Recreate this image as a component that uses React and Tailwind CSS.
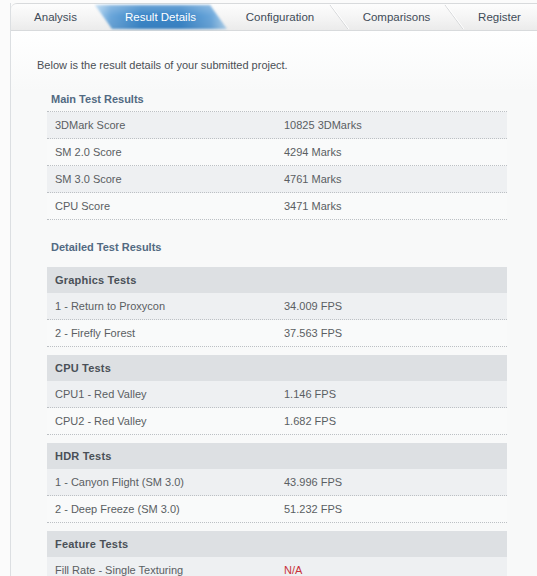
import React from "react";

const mainRows = [
  ["3DMark Score", "10825 3DMarks"],
  ["SM 2.0 Score", "4294 Marks"],
  ["SM 3.0 Score", "4761 Marks"],
  ["CPU Score", "3471 Marks"],
];

const sections = [
  {
    title: "Graphics Tests",
    rows: [
      ["1 - Return to Proxycon", "34.009 FPS"],
      ["2 - Firefly Forest", "37.563 FPS"],
    ],
  },
  {
    title: "CPU Tests",
    rows: [
      ["CPU1 - Red Valley", "1.146 FPS"],
      ["CPU2 - Red Valley", "1.682 FPS"],
    ],
  },
  {
    title: "HDR Tests",
    rows: [
      ["1 - Canyon Flight (SM 3.0)", "43.996 FPS"],
      ["2 - Deep Freeze (SM 3.0)", "51.232 FPS"],
    ],
  },
  {
    title: "Feature Tests",
    rows: [["Fill Rate - Single Texturing", "N/A", true]],
  },
];

function Row({ label, value, odd, red }) {
  return (
    <div
      className={`flex h-[27px] items-center border-b border-dotted border-[#bcc0c4] text-[11px] leading-[13px] text-[#5a5e62] ${
        odd ? "bg-[#eef0f2]" : "bg-[#f9fafa]"
      }`}
    >
      <div className="w-[237px] shrink-0 pl-[8px]">{label}</div>
      <div className={red ? "text-[#c8323a]" : ""}>{value}</div>
    </div>
  );
}

function Separator() {
  return (
    <svg
      className="absolute left-[-10px] top-0 h-full w-[20px]"
      viewBox="0 0 20 27"
      preserveAspectRatio="none"
    >
      <line x1="1" y1="1" x2="19" y2="26" stroke="#d3d5d7" strokeWidth="1" />
      <line x1="2" y1="1" x2="20" y2="26" stroke="#ffffff" strokeWidth="1" />
    </svg>
  );
}

function Tab({ label, width, active, sep }) {
  return (
    <div
      className={`relative flex h-full shrink-0 items-center justify-center ${width}`}
    >
      {sep && <Separator />}
      {active && (
        <div className="absolute left-[-5px] top-[1px] bottom-[1px] w-[132px] blur-[0.8px]">
          <div className="h-full w-full bg-[linear-gradient(90deg,#b3d5f0_0%,#6aa6da_12%,#3b86c8_35%,#3b86c8_65%,#6aa6da_88%,#b3d5f0_100%)] [clip-path:polygon(0_0,115px_0,132px_100%,17px_100%)]">
            <div className="h-full w-full bg-[linear-gradient(180deg,rgba(255,255,255,0.25)_0%,rgba(255,255,255,0)_45%,rgba(0,0,0,0.05)_100%)]" />
          </div>
        </div>
      )}
      <span
        className={`relative text-[11.5px] leading-[14px] ${
          active ? "text-white" : "text-[#3f4b58]"
        }`}
      >
        {label}
      </span>
    </div>
  );
}

export default function App() {
  return (
    <div className="h-[576px] w-[537px] overflow-hidden bg-[#fbfbfb] font-['Liberation_Sans',Arial,sans-serif]">
      <div className="ml-[10px] mt-[3px] w-[540px] border-l border-[#dcdfe2]">
        {/* tab bar */}
        <div className="flex h-[28px] rounded-tl-[6px] border-t border-b border-[#d8dadc] bg-[linear-gradient(180deg,#fdfdfd_0%,#f3f3f3_60%,#ebebeb_100%)]">
          <Tab label="Analysis" width="w-[89px]" />
          <Tab label="Result Details" width="w-[121px]" active />
          <Tab label="Configuration" width="w-[118px]" />
          <Tab label="Comparisons" width="w-[115px]" sep />
          <Tab label="Register" width="w-[91px]" sep />
        </div>

        {/* content */}
        <div className="h-[560px] bg-[linear-gradient(180deg,#ffffff_0px,#f8f9f9_60px,#f8f9f9_100%)] pl-[26px] pt-[27px]">
          <p className="text-[11px] leading-[14px] text-[#4a4f55]">
            Below is the result details of your submitted project.
          </p>

          <div className="ml-[10px] w-[460px]">
            <h2 className="mt-[20px] pl-[4px] text-[11px] font-bold leading-[14px] text-[#526a82]">
              Main Test Results
            </h2>
            <div className="mt-[5px] border-t border-dotted border-[#bcc0c4]">
              {mainRows.map((r, i) => (
                <Row key={r[0]} label={r[0]} value={r[1]} odd={i % 2 === 0} />
              ))}
            </div>

            <h2 className="mt-[20px] pl-[4px] text-[11px] font-bold leading-[14px] text-[#526a82]">
              Detailed Test Results
            </h2>

            <div className="mt-[13px] flex flex-col gap-[8px]">
              {sections.map((s) => (
                <div key={s.title}>
                  <div className="flex h-[26px] items-center bg-[#dde0e3] pl-[8px] text-[11px] font-bold leading-[13px] tracking-[0.2px] text-[#4a5057]">
                    {s.title}
                  </div>
                  {s.rows.map((r, i) => (
                    <Row
                      key={r[0]}
                      label={r[0]}
                      value={r[1]}
                      red={r[2]}
                      odd={i % 2 === 0}
                    />
                  ))}
                </div>
              ))}
            </div>
          </div>
        </div>
      </div>
    </div>
  );
}
